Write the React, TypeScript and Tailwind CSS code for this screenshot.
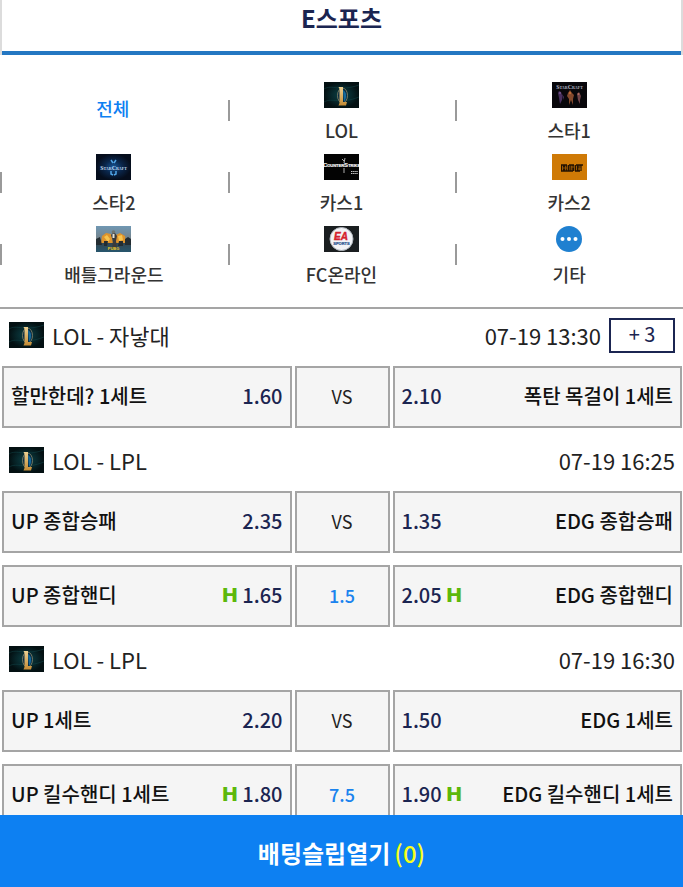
import type { ReactNode } from "react";

type Category = {
  label: string;
  icon?: ReactNode;
};

type Side = {
  name: string;
  odds: string;
};

type Market = {
  home: Side;
  away: Side;
  handicap?: string;
};

type Match = {
  id: number;
  league: string;
  time: string;
  extra?: number;
  markets: Market[];
};

function LolIcon() {
  return (
    <svg viewBox="0 0 35 26" className="h-[26px] w-[35px] shrink-0" aria-hidden="true">
      <defs>
        <radialGradient id="lol-bg">
          <stop offset="0" stopColor="#0b4247" />
          <stop offset="0.6" stopColor="#07262a" />
          <stop offset="1" stopColor="#031012" />
        </radialGradient>
        <linearGradient id="lol-gold" x1="0" y1="0" x2="0" y2="1">
          <stop offset="0" stopColor="#ecd092" />
          <stop offset="1" stopColor="#c38b35" />
        </linearGradient>
      </defs>
      <rect width="35" height="26" fill="url(#lol-bg)" />
      <path d="M0 7C8 2 15 10 35 3M0 20c9-5 15 3 35-5" stroke="#12484c" strokeWidth="1" fill="none" opacity=".5" />
      <ellipse cx="18.5" cy="13.5" rx="5" ry="7.5" fill="#072b42" stroke="#8f8a6b" strokeWidth="0.8" />
      <path d="M19 8c4 2 4 8 1 12z" fill="#15699a" />
      <path d="M14.500 5h4.500v15h4l-1 3.500h-7.500l1-2.500V7z" fill="url(#lol-gold)" />
    </svg>
  );
}

function StarOneIcon() {
  return (
    <svg viewBox="0 0 35 26" className="h-[26px] w-[35px]" aria-hidden="true">
      <rect width="35" height="26" fill="#08070b" />
      <path d="M6 11l1-2 2 1 1 3v5l-2 4-1-6zM10 12l2 3-1 3" fill="#49305f" />
      <path d="M16 11l2-3 2 3 2 2-1 4v6l-2-5-2 5v-6l-2-3z" fill="#83492d" />
      <path d="M25 12l2-2 2 4-1 4v4l-2-4z" fill="#704348" />
      <circle cx="8" cy="11" r="1" fill="#795791" />
      <circle cx="18" cy="11" r="1.2" fill="#c06b37" />
      <circle cx="26.500" cy="12" r="1" fill="#b36f61" />
      <text x="17.5" y="6.5" textAnchor="middle" fontFamily="Liberation Sans Narrow, Liberation Serif" fontWeight="700" fontSize="4" fill="#b5b7c4">
        <tspan fontSize="6">S</tspan>TAR<tspan fontSize="6">C</tspan>RAFT
      </text>
    </svg>
  );
}

function StarTwoIcon() {
  return (
    <svg viewBox="0 0 35 26" className="h-[26px] w-[35px]" aria-hidden="true">
      <defs>
        <radialGradient id="star2-bg">
          <stop offset="0" stopColor="#15569a" />
          <stop offset="0.5" stopColor="#0a264b" />
          <stop offset="1" stopColor="#050d1c" />
        </radialGradient>
      </defs>
      <rect width="35" height="26" fill="url(#star2-bg)" />
      <path d="M15 6l2 3M20 6l-2 3M15 17v3l2 1M20 17v3l-2 1" stroke="#4fa4e6" strokeWidth="1.5" fill="none" />
      <text x="17.5" y="15.500" textAnchor="middle" fontFamily="Liberation Serif" fontWeight="700" fontSize="4" fill="#c4dff4">
        <tspan fontSize="6">S</tspan>TAR<tspan fontSize="6">C</tspan>RAFT
      </text>
    </svg>
  );
}

function CounterStrikeIcon() {
  return (
    <svg viewBox="0 0 35 26" className="h-[26px] w-[35px]" aria-hidden="true">
      <rect width="35" height="26" fill="#030303" />
      <text x="17.5" y="13" textAnchor="middle" fontFamily="Liberation Sans Narrow, Liberation Sans" fontWeight="700" fontSize="4" fill="#f4f4f4" stroke="#f4f4f4" strokeWidth="0.2">
        <tspan fontSize="6">C</tspan>OUNTER<tspan fontSize="6">S</tspan>TRIKE
      </text>
      <path d="M21 4l-1 5M20 14v5M18 5l2 2" stroke="#d8d8d8" strokeWidth="0.8" fill="none" />
      <path d="M27 17.500h7M27 19.500h7" stroke="#c9c9c9" strokeWidth="1" strokeDasharray="1.500 0.600" />
    </svg>
  );
}

function CounterStrikeTwoIcon() {
  return (
    <svg viewBox="0 0 35 26" className="h-[26px] w-[35px]" aria-hidden="true">
      <rect width="35" height="26" fill="#cf7a06" />
      <path d="M9 11h6M17 11h5M24 11h7M9 17h12M23 17h5" stroke="#241302" strokeWidth="1.500" />
      <path d="M9 14h21" stroke="#241302" strokeWidth="6" strokeDasharray="1.300 0.700 2 0.600" />
      <path d="M11 14h4M19 13h3M26 15h3" stroke="#a35f06" strokeWidth="0.800" />
    </svg>
  );
}

function BattlegroundIcon() {
  return (
    <svg viewBox="0 0 35 26" className="h-[26px] w-[35px]" aria-hidden="true">
      <defs>
        <linearGradient id="bg-sky" x1="0" y1="0" x2="0" y2="1">
          <stop offset="0" stopColor="#6f97b3" />
          <stop offset="0.5" stopColor="#75838a" />
          <stop offset="0.6" stopColor="#34434c" />
          <stop offset="1" stopColor="#27566d" />
        </linearGradient>
      </defs>
      <rect width="35" height="26" fill="url(#bg-sky)" />
      <path d="M5 17l1-7 4-3 5 1 2 9zM19 17l1-8 4-2 5 3 1 7z" fill="#dd932c" />
      <path d="M8 11l3-2 3 4-2 3zM22 10l4-1 1 5-4 1z" fill="#f7c44e" />
      <path d="M0 13l4-2 2 8H0zM29 13l3-2 3 2v6h-6zM8 15h4l-1 5H8zM23 15h4v5h-5z" fill="#232c31" />
      <path d="M15 9l2-2h2l2 3-1 5 1 7h-5l1-7z" fill="#3a3b3c" />
      <circle cx="17.5" cy="6" r="1.8" fill="#6f7470" />
      <path d="M16.5 8h2v4h-2z" fill="#e6e0d2" />
      <text x="17.5" y="24" textAnchor="middle" fontFamily="Liberation Sans" fontWeight="700" fontSize="4" fill="#f0ca22">
        PUBG
      </text>
    </svg>
  );
}

function EaSportsIcon() {
  return (
    <svg viewBox="0 0 35 26" className="h-[26px] w-[35px]" aria-hidden="true">
      <rect width="35" height="26" fill="#1a1e20" />
      <circle cx="17.5" cy="13" r="11.5" fill="#f2f3f6" stroke="#aeb4bb" strokeWidth="1" />
      <text x="17" y="14" textAnchor="middle" fontFamily="Liberation Sans" fontStyle="italic" fontWeight="700" fontSize="10" fill="#d5202c" stroke="#d5202c" strokeWidth="0.4">
        EA
      </text>
      <text x="17.5" y="19" textAnchor="middle" fontFamily="Liberation Sans" fontWeight="700" fontSize="4" fill="#27508d" stroke="#27508d" strokeWidth="0.2">
        SPORTS
      </text>
    </svg>
  );
}

function MoreIcon() {
  return (
    <svg viewBox="0 0 26 26" className="size-[26px]" aria-hidden="true">
      <circle cx="13" cy="13" r="13" fill="#1f80d0" />
      <circle cx="6.5" cy="13" r="2" fill="#fff" />
      <circle cx="13" cy="13" r="2" fill="#fff" />
      <circle cx="19.5" cy="13" r="2" fill="#fff" />
    </svg>
  );
}

const categories: Category[] = [
  { label: "전체" },
  { label: "LOL", icon: <LolIcon /> },
  { label: "스타1", icon: <StarOneIcon /> },
  { label: "스타2", icon: <StarTwoIcon /> },
  { label: "카스1", icon: <CounterStrikeIcon /> },
  { label: "카스2", icon: <CounterStrikeTwoIcon /> },
  { label: "배틀그라운드", icon: <BattlegroundIcon /> },
  { label: "FC온라인", icon: <EaSportsIcon /> },
  { label: "기타", icon: <MoreIcon /> },
];

const matches: Match[] = [
  {
    id: 1,
    league: "LOL - 자낳대",
    time: "07-19 13:30",
    extra: 3,
    markets: [
      {
        home: { name: "할만한데? 1세트", odds: "1.60" },
        away: { name: "폭탄 목걸이 1세트", odds: "2.10" },
      },
    ],
  },
  {
    id: 2,
    league: "LOL - LPL",
    time: "07-19 16:25",
    markets: [
      {
        home: { name: "UP 종합승패", odds: "2.35" },
        away: { name: "EDG 종합승패", odds: "1.35" },
      },
      {
        home: { name: "UP 종합핸디", odds: "1.65" },
        away: { name: "EDG 종합핸디", odds: "2.05" },
        handicap: "1.5",
      },
    ],
  },
  {
    id: 3,
    league: "LOL - LPL",
    time: "07-19 16:30",
    markets: [
      {
        home: { name: "UP 1세트", odds: "2.20" },
        away: { name: "EDG 1세트", odds: "1.50" },
      },
      {
        home: { name: "UP 킬수핸디 1세트", odds: "1.80" },
        away: { name: "EDG 킬수핸디 1세트", odds: "1.90" },
        handicap: "7.5",
      },
    ],
  },
];

function Odds({ value, handicap, reverse }: { value: string; handicap: boolean; reverse?: boolean }) {
  return (
    <span className={`flex items-center gap-1 ${reverse ? "flex-row-reverse" : ""}`}>
      {handicap && (
        <span className="font-['DejaVu_Sans'] text-[20px] leading-6 font-bold text-[#5cb80b]">H</span>
      )}
      <span className="text-[20px] font-medium text-[#1b2551]">{value}</span>
    </span>
  );
}

function MarketRow({ market }: { market: Market }) {
  const hasHandicap = market.handicap !== undefined;
  const box = "flex h-[62px] items-center border-2 border-[#a5a5a5] bg-[#f5f5f5] pb-0.5";

  return (
    <div className="grid grid-cols-[1fr_95px_1fr] gap-[3px]">
      <button type="button" className={`${box} justify-between px-[7px]`}>
        <span className="text-[20px] font-medium text-[#111]">{market.home.name}</span>
        <Odds value={market.home.odds} handicap={hasHandicap} />
      </button>
      <div className={`${box} justify-center`}>
        {hasHandicap ? (
          <span className="text-[18px] font-medium text-[#1a83ee]">{market.handicap}</span>
        ) : (
          <span className="text-[18px] text-[#222]">VS</span>
        )}
      </div>
      <button type="button" className={`${box} justify-between px-[7px]`}>
        <Odds value={market.away.odds} handicap={hasHandicap} reverse />
        <span className="text-[20px] font-medium text-[#111]">{market.away.name}</span>
      </button>
    </div>
  );
}

export default function App() {
  return (
    <div className="flex h-screen flex-col bg-white font-['Noto_Sans_CJK_KR',sans-serif] text-[#222]">
      <main className="min-h-0 flex-1 overflow-y-auto [scrollbar-width:none]">
        <header className="border-x-2 border-[#dcdcdc]">
          <h1 className="border-b-4 border-b-[#2477c2] pt-0.5 pb-[18px] text-center text-[24px] leading-[31px] font-bold text-[#1b2551]">
            E스포츠
          </h1>
        </header>

        <nav className="grid grid-cols-3 border-b-2 border-[#a5a5a5] pt-[19px] pb-[17px]">
          {categories.map((category, index) => (
            <div key={category.label} className="flex h-[72px] items-center">
              {index > 0 && <span className="h-[21px] w-0.5 bg-[#9a9a9a]" />}
              <button
                type="button"
                className={`flex h-full flex-1 flex-col items-center justify-center gap-2 pr-0.5 ${
                  category.icon ? "pt-[5px]" : "pb-1"
                }`}
              >
                {category.icon}
                <span
                  className={`text-[18px] leading-7 font-medium ${
                    category.icon ? "text-[#333]" : "text-[#0d80f2]"
                  }`}
                >
                  {category.label}
                </span>
              </button>
            </div>
          ))}
        </nav>

        <div className="flex flex-col gap-1.5 pr-px pl-0.5">
          {matches.map((match) => (
            <section key={match.id}>
              <div className="mb-[5px] flex h-[52px] items-center justify-between px-[7px] text-[22px]">
                <h2 className="flex items-center gap-2">
                  <LolIcon />
                  {match.league}
                </h2>
                <div className="flex items-center gap-2">
                  <time>{match.time}</time>
                  {match.extra && (
                    <button
                      type="button"
                      className="h-[35px] w-[66px] border-2 border-[#1b2551] pb-0.5 text-[20px] leading-none text-[#1b2551]"
                    >
                      + {match.extra}
                    </button>
                  )}
                </div>
              </div>
              <div className="flex flex-col gap-3">
                {match.markets.map((market) => (
                  <MarketRow key={market.home.name} market={market} />
                ))}
              </div>
            </section>
          ))}
        </div>
      </main>

      <button
        type="button"
        className="flex h-[72px] shrink-0 items-center justify-center gap-1 bg-[#0d80f2] pt-1 text-[24px] font-bold text-white"
      >
        배팅슬립열기
        <span className="font-medium text-[#f6ff1a]">(0)</span>
      </button>
    </div>
  );
}
